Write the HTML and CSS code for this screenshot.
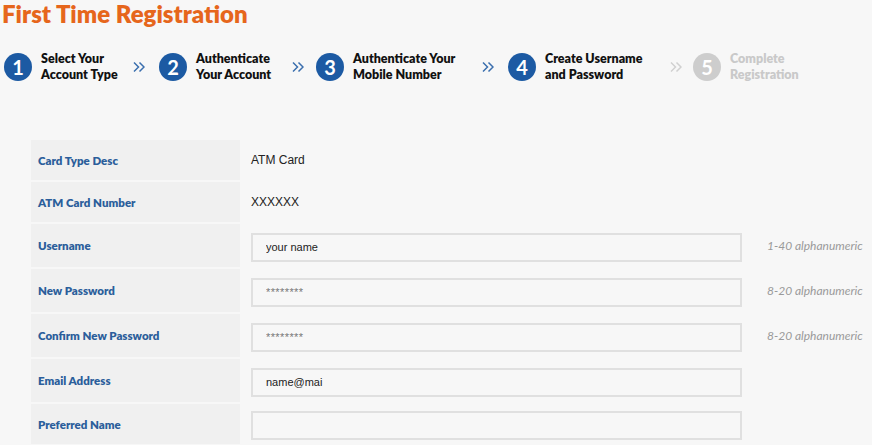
FILE: index.html
```html
<!DOCTYPE html>
<html>
<head>
<meta charset="utf-8">
<link rel="stylesheet" href="styles.css">
</head>
<body>
<div class="page">
  <h1 class="title">First Time Registration</h1>
  <div class="steps">
    <div class="step"><span class="num">1</span><span class="step-text">Select Your<br>Account Type</span></div>
    <svg class="chev" width="12" height="12" viewBox="0 0 12 12"><path d="M1 1.5 L5.5 6 L1 10.5 M6.5 1.5 L11 6 L6.5 10.5" fill="none" stroke="currentColor" stroke-width="1.5"/></svg>
    <div class="step"><span class="num">2</span><span class="step-text">Authenticate<br>Your Account</span></div>
    <svg class="chev" width="12" height="12" viewBox="0 0 12 12"><path d="M1 1.5 L5.5 6 L1 10.5 M6.5 1.5 L11 6 L6.5 10.5" fill="none" stroke="currentColor" stroke-width="1.5"/></svg>
    <div class="step"><span class="num">3</span><span class="step-text">Authenticate Your<br>Mobile Number</span></div>
    <svg class="chev" width="12" height="12" viewBox="0 0 12 12"><path d="M1 1.5 L5.5 6 L1 10.5 M6.5 1.5 L11 6 L6.5 10.5" fill="none" stroke="currentColor" stroke-width="1.5"/></svg>
    <div class="step"><span class="num">4</span><span class="step-text">Create Username<br>and Password</span></div>
    <svg class="chev off" width="12" height="12" viewBox="0 0 12 12"><path d="M1 1.5 L5.5 6 L1 10.5 M6.5 1.5 L11 6 L6.5 10.5" fill="none" stroke="currentColor" stroke-width="1.5"/></svg>
    <div class="step off"><span class="num">5</span><span class="step-text">Complete<br>Registration</span></div>
  </div>
  <div class="form">
    <div class="row short"><div class="label">Card Type Desc</div><div class="value">ATM Card</div></div>
    <div class="row short"><div class="label">ATM Card Number</div><div class="value">XXXXXX</div></div>
    <div class="row"><div class="label">Username</div><div class="value"><input class="field" type="text" value="your name"></div><div class="hint">1-40 alphanumeric</div></div>
    <div class="row"><div class="label">New Password</div><div class="value"><input class="field pw" type="text" value="********"></div><div class="hint">8-20 alphanumeric</div></div>
    <div class="row"><div class="label">Confirm New Password</div><div class="value"><input class="field pw" type="text" value="********"></div><div class="hint">8-20 alphanumeric</div></div>
    <div class="row"><div class="label">Email Address</div><div class="value"><input class="field" type="text" value="name@mai"></div></div>
    <div class="row short"><div class="label">Preferred Name</div><div class="value"><input class="field" type="text" value=""></div></div>
  </div>
</div>
</body>
</html>
```
FILE: styles.css
```css
html, body {
  margin: 0;
  background: #f7f7f7;
}
.page {
  width: 872px;
  height: 445px;
  overflow: hidden;
  padding-left: 2px;
  box-sizing: border-box;
  font-family: Lato, "Open Sans", sans-serif;
}
.title {
  margin: 0;
  font-size: 24px;
  line-height: 28px;
  font-weight: 800;
  color: #e6661c;
}
.steps {
  display: grid;
  grid-template-columns: 129px 26px 133px 24px 166px 26px 162px 23px auto;
  align-items: center;
  margin-top: 22px;
  padding-left: 2px;
}
.step {
  display: flex;
  align-items: center;
  gap: 9px;
}
.num {
  width: 28px;
  height: 28px;
  border-radius: 50%;
  background: #1c5aa3;
  color: #fff;
  font-size: 20px;
  font-weight: 700;
  display: flex;
  align-items: center;
  justify-content: center;
  flex: none;
}
.step-text {
  font-size: 12.5px;
  line-height: 16px;
  font-weight: 800;
  color: #111;
  padding-top: 1px;
}
.chev {
  color: #3b6fae;
  display: block;
}
.chev.off { color: #d0d0d0; }
.step.off .num { background: #cdcdcd; }
.step.off .step-text { color: #c9c9c9; }
.form {
  margin-top: 57px;
  margin-left: 29px;
  display: flex;
  flex-direction: column;
  gap: 2px;
}
.row {
  display: grid;
  grid-template-columns: 209px 491px auto;
  column-gap: 11px;
  height: 43px;
  align-items: center;
}
.row.short { height: 40px; }
.label {
  background: #f0f0f0;
  height: 100%;
  display: flex;
  align-items: center;
  padding-left: 7px;
  font-size: 11.5px;
  font-weight: 800;
  color: #2b5e9b;
}
.value {
  font-family: "Liberation Sans", Arial, sans-serif;
  font-size: 12px;
  color: #222;
}
.field {
  display: block;
  width: 491px;
  height: 29px;
  box-sizing: border-box;
  border: 2px solid #e0e0e0;
  background: #f7f7f7;
  padding: 0 13px;
  font-family: "Liberation Sans", Arial, sans-serif;
  font-size: 11px;
  color: #222;
  outline: none;
  margin-top: 3px;
}
.field.pw {
  font-size: 11px;
  color: #777;
  letter-spacing: 0.4px;
}
.hint {
  margin-left: 14px;
  font-size: 12px;
  font-style: italic;
  color: #9a9a9a;
}
```
